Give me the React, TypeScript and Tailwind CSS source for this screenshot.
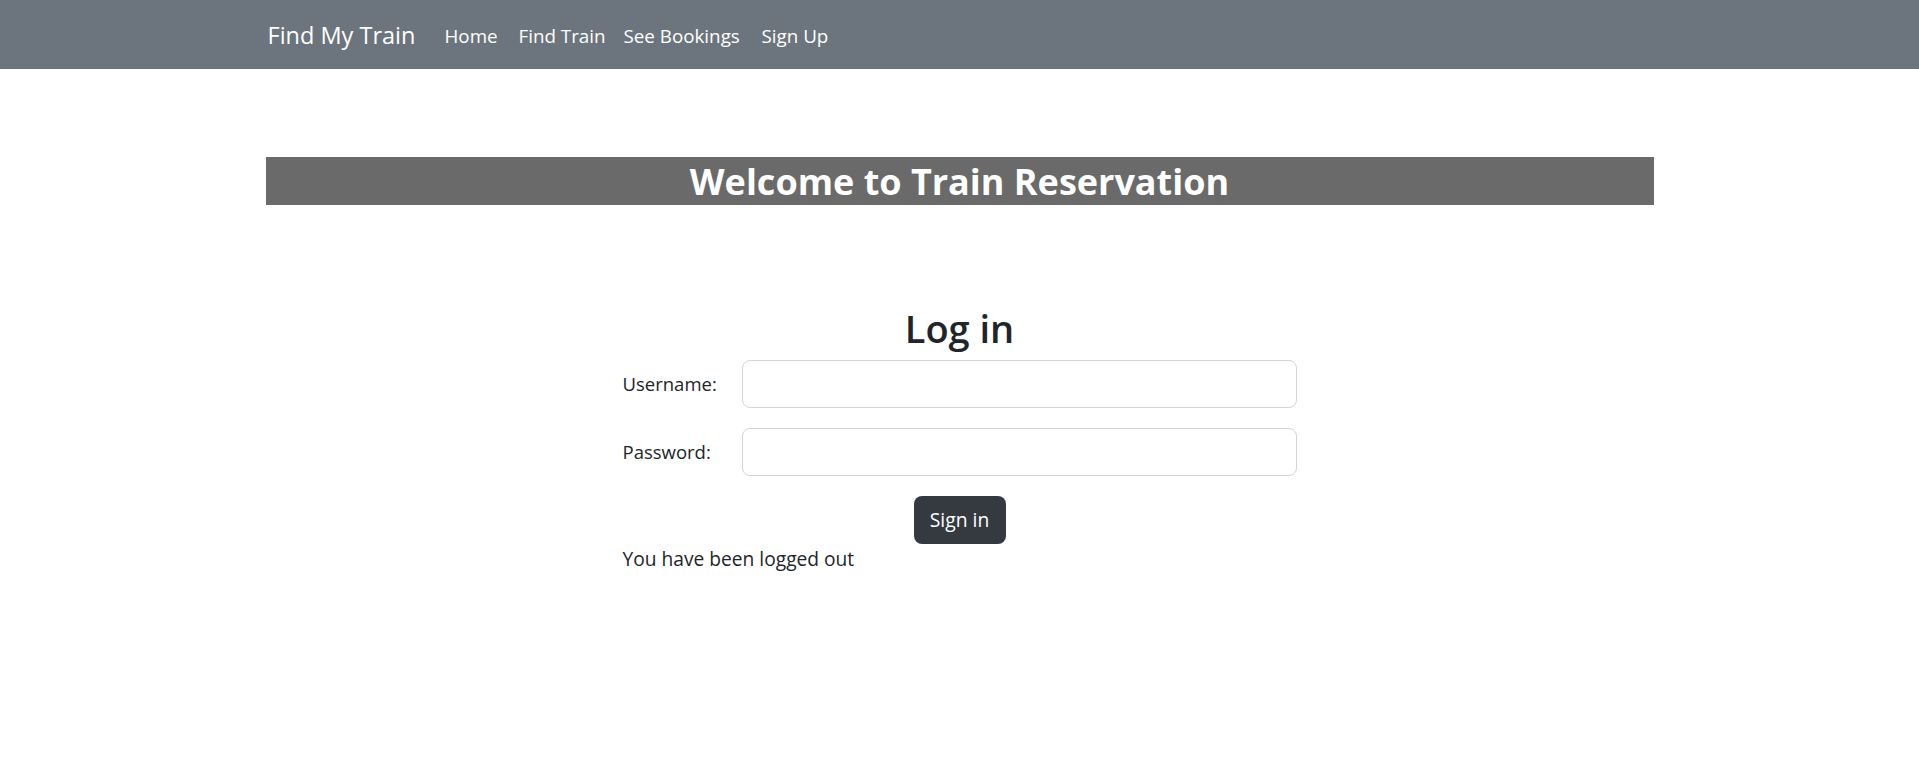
export default function App() {
  const font = { fontFamily: '"Open Sans", "Noto Sans", sans-serif' };
  return (
    <div className="min-h-[780px] bg-white text-[#212529]" style={font}>
      <nav className="h-[69px] bg-[#6c757d] pt-[3px]">
        <div className="mx-auto flex h-full w-[1388px] items-center">
          <span className="ml-[2px] w-[177px] text-[23.5px] text-white">Find My Train</span>
          <a className="w-[74px] text-[18.8px] text-white">Home</a>
          <a className="w-[105px] text-[18.8px] text-white">Find Train</a>
          <a className="w-[138px] text-[18.8px] text-white">See Bookings</a>
          <a className="text-[18.8px] text-white">Sign Up</a>
        </div>
      </nav>
      <div className="mx-auto mt-[88px] flex h-[48px] w-[1388px] items-center justify-center bg-[#6a6a6a]">
        <h1 className="pt-[2px] text-[36px] font-bold leading-[48px] text-white">Welcome to Train Reservation</h1>
      </div>
      <div className="mx-auto mt-[99px] w-[674px]">
        <h2 className="text-center text-[38px] font-semibold leading-[48px]">Log in</h2>
        <div className="mt-[8px] flex items-center">
          <label className="w-[119px] text-[18.5px]">Username:</label>
          <input className="h-[48px] flex-1 rounded-[8px] border border-[#ced4da] px-4 outline-none" />
        </div>
        <div className="mt-[20px] flex items-center">
          <label className="w-[119px] text-[18.5px]">Password:</label>
          <input type="password" className="h-[48px] flex-1 rounded-[8px] border border-[#ced4da] px-4 outline-none" />
        </div>
        <div className="mt-[20px] flex justify-center">
          <button className="h-[48px] w-[92px] rounded-[8px] bg-[#343a40] text-[19.3px] text-white">Sign in</button>
        </div>
        <p className="text-[19.2px] leading-[30px]">You have been logged out</p>
      </div>
    </div>
  );
}
